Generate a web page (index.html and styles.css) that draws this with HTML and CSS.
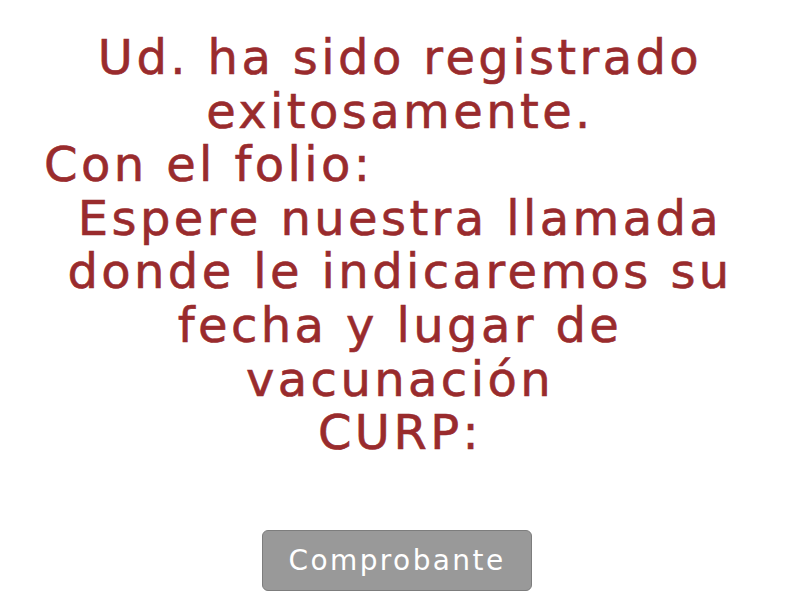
FILE: index.html
```html
<!DOCTYPE html>
<html lang="es">
<head>
<meta charset="utf-8">
<title>Registro</title>
<link rel="stylesheet" href="styles.css">
</head>
<body>
<main class="page">
  <section class="message">
    <p class="line">Ud. ha sido registrado exitosamente.</p>
    <p class="line nowrap">Con el folio: <span class="redacted folio"></span></p>
    <p class="line">Espere nuestra llamada donde le indicaremos su fecha y lugar de vacunación</p>
    <p class="line">CURP:</p>
    <p class="line redacted-line"><span class="redacted curp"></span></p>
  </section>
  <div class="actions">
    <button class="btn" type="button">Comprobante</button>
  </div>
</main>
</body>
</html>
```
FILE: styles.css
```css
html, body {
  margin: 0;
  padding: 0;
  background: #ffffff;
}
.page {
  width: 800px;
  height: 600px;
  display: flex;
  flex-direction: column;
  align-items: center;
  font-family: "DejaVu Sans", "Liberation Sans", sans-serif;
}
.message {
  width: 700px;
  padding-top: 31px;
  height: 448px;
  text-align: center;
  color: #992b2d;
  font-size: 48px;
  line-height: 53.6px;
  letter-spacing: 3.4px;
  -webkit-text-stroke: 0.6px #992b2d;
}
.line {
  margin: 0;
}
.nowrap {
  white-space: nowrap;
  margin-left: -50px;
  margin-right: -50px;
}
.redacted {
  display: inline-block;
  height: 1px;
}
.folio {
  width: 364px;
}
.curp {
  width: 600px;
}
.redacted-line {
  height: 26px;
  overflow: hidden;
}
.actions {
  margin-top: 51px;
  margin-right: 6px;
  display: flex;
  justify-content: center;
}
.btn {
  width: 270px;
  height: 61px;
  background: #999999;
  border: 1px solid #7d7d7d;
  border-radius: 6px;
  color: #ffffff;
  font-family: "DejaVu Sans", "Liberation Sans", sans-serif;
  font-size: 28px;
  letter-spacing: 2.4px;
  padding: 0;
}
```
